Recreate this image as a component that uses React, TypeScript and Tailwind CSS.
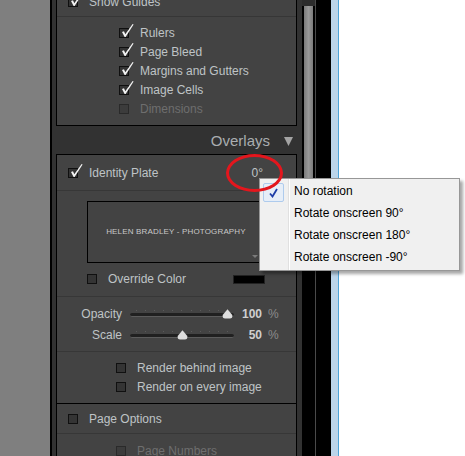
import type { ReactNode } from "react";

function Box({ checked = false, dim = false }: { checked?: boolean; dim?: boolean }) {
  return (
    <span
      className={`relative block h-[10px] w-[10px] shrink-0 border ${
        dim ? "border-[#2a2a2a] bg-[#3c3c3c]" : "border-[#101010] bg-[#343434]"
      }`}
    >
      {checked && (
        <svg
          className="absolute top-[-6px] left-[-1px] h-[16px] w-[16px] overflow-visible"
          viewBox="0 0 16 16"
        >
          <path d="M3 9 L5 8.2 L6.3 11.2 L13.6 1 L14.6 1.6 L6.6 14 L5.6 14 Z" fill="#f2f2f2" />
        </svg>
      )}
    </span>
  );
}

function Row({
  h,
  pl,
  checked,
  dim,
  children,
}: {
  h: string;
  pl: string;
  checked?: boolean;
  dim?: boolean;
  children: ReactNode;
}) {
  return (
    <div className={`flex shrink-0 items-center ${h} ${pl}`}>
      <Box checked={checked} dim={dim} />
      <span className={`ml-[11px] text-[12px] ${dim ? "text-[#6e6e6e]" : "text-[#bfc3c6]"}`}>
        {children}
      </span>
    </div>
  );
}

function Slider({ label, value, pos }: { label: string; value: string; pos: string }) {
  return (
    <div className="flex h-[20px] items-center">
      <span className="w-[65px] text-right text-[12px] text-[#bfc3c6]">{label}</span>
      <div className="relative ml-[8px] h-[20px] w-[104px]">
        <div className="absolute top-[6px] right-[6px] left-[6px] flex justify-between">
          {Array.from({ length: 11 }).map((_, i) => (
            <span key={i} className="h-[1px] w-[1px] bg-[#5a5a5a]" />
          ))}
        </div>
        <div className="absolute top-[9px] right-0 left-0 h-[4px] rounded-full border-b border-[#5c5c5c] bg-[#202020]" />
        <svg className={`absolute top-[5px] h-[10px] w-[11px] ${pos}`} viewBox="0 0 11 10">
          <path d="M5.5 0.3 L10.3 6 Q10.8 9.5 7.8 9.6 L3.2 9.6 Q0.2 9.5 0.7 6 Z" fill="#dedede" />
        </svg>
      </div>
      <span className="w-[28px] text-right text-[12px] font-bold text-[#cfcfcf]">{value}</span>
      <span className="ml-[6px] text-[12px] text-[#8c8c8c]">%</span>
    </div>
  );
}

export default function App() {
  return (
    <div className="relative flex h-[456px] w-[465px] overflow-hidden bg-white font-['Liberation_Sans',Arial,sans-serif]">
      <div className="w-[50px] shrink-0 bg-[#7f7f7f]" />
      <div className="w-[2px] shrink-0 bg-black" />

      {/* panel */}
      <div className="flex w-[250px] shrink-0 flex-col bg-[#323232] pr-[5px] pl-[4px]">
        {/* guides card */}
        <div className="-mt-[12px] w-[241px] shrink-0 border-x border-b border-black bg-[#434343]">
          <div className="border-b border-[#363636]">
            <Row h="h-[28px]" pl="pl-[11px]" checked>
              Show Guides
            </Row>
          </div>
          <div className="pt-[6px] pb-[7px]">
            <Row h="h-[19px]" pl="pl-[62px]" checked>Rulers</Row>
            <Row h="h-[19px]" pl="pl-[62px]" checked>Page Bleed</Row>
            <Row h="h-[19px]" pl="pl-[62px]" checked>Margins and Gutters</Row>
            <Row h="h-[19px]" pl="pl-[62px]" checked>Image Cells</Row>
            <Row h="h-[19px]" pl="pl-[62px]" dim>Dimensions</Row>
          </div>
        </div>

        {/* header */}
        <div className="flex h-[28px] shrink-0 items-center justify-end pt-[3px] pr-[4px]">
          <span className="text-[15px] text-[#a9adb0]">Overlays</span>
          <svg className="ml-[14px] h-[9px] w-[9px]" viewBox="0 0 9 9">
            <path d="M0 0 L9 0 L4.5 9 Z" fill="#a3a3a3" />
          </svg>
        </div>

        {/* overlays card */}
        <div className="w-[241px] shrink-0 grow border-x border-t border-black bg-[#434343]">
          <div className="border-b border-[#373737]">
            <div className="flex h-[35px] items-center pr-[33px] pl-[11px]">
              <Box checked />
              <span className="ml-[11px] text-[12px] text-[#bfc3c6]">Identity Plate</span>
              <span className="ml-auto text-[12px] text-[#bfc3c6]">0°</span>
            </div>
          </div>

          <div className="border-b border-[#373737] pt-[10px] pb-[8px] pl-[30px]">
            <div className="relative flex h-[62px] w-[178px] items-center justify-center border border-black">
              <span className="text-[8px] tracking-[0.02em] text-[#c9c9c9]">
                HELEN BRADLEY - PHOTOGRAPHY
              </span>
              <svg className="absolute right-[6px] bottom-[4px] h-[3px] w-[6px]" viewBox="0 0 6 3">
                <path d="M0 0 L6 0 L3 3 Z" fill="#7a7a7a" />
              </svg>
            </div>
            <div className="mt-[7px] flex h-[18px] w-[178px] items-center">
              <Box />
              <span className="ml-[11px] text-[12px] text-[#bfc3c6]">Override Color</span>
              <span className="ml-auto h-[9px] w-[32px] border border-[#222] bg-black" />
            </div>
          </div>

          <div className="border-b border-[#373737] pt-[7px] pb-[6px]">
            <Slider label="Opacity" value="100" pos="left-[92px]" />
            <div className="h-[1px]" />
            <Slider label="Scale" value="50" pos="left-[47px]" />
          </div>

          <div className="border-b border-black pt-[6px] pb-[7px]">
            <Row h="h-[19px]" pl="pl-[59px]">Render behind image</Row>
            <Row h="h-[19px]" pl="pl-[59px]">Render on every image</Row>
          </div>

          <div className="border-b border-[#373737]">
            <Row h="h-[29px]" pl="pl-[11px]">Page Options</Row>
          </div>
          <div className="pt-[7px]">
            <Row h="h-[19px]" pl="pl-[59px]" dim>Page Numbers</Row>
          </div>
        </div>
      </div>

      {/* scrollbar */}
      <div className="relative w-[14px] shrink-0 border-r border-[#4a4a4a] bg-black">
        <div className="absolute top-0 left-0 h-[6px] w-[13px] bg-[#2c2c2c]" />
        <div className="absolute top-[6px] left-[2px] h-[244px] w-[9px] bg-gradient-to-r from-[#7a7a7a] via-[#989898] to-[#7c7c7c]" />
      </div>
      <div className="w-[15px] shrink-0 bg-black" />
      <div className="w-[7px] shrink-0 bg-[#bcd5ea]" />
      <div className="w-[1px] shrink-0 bg-[#4fa4d8]" />
      <div className="grow bg-white" />

      {/* context menu */}
      <div className="absolute top-[178px] left-[259px] flex h-[93px] w-[201px] border border-[#979797] bg-[#f0f0f0] shadow-[3px_3px_3px_rgba(0,0,0,0.35)]">
        <div className="w-[29px] shrink-0 border-r border-[#e0e0e0] pt-[4px] pl-[3px]">
          <div className="flex h-[19px] w-[21px] items-center justify-center rounded-[2px] border border-[#aecbed] bg-[#e6eef8]">
            <svg className="h-[10px] w-[9px]" viewBox="0 0 9 10">
              <path d="M1 5.5 L3.5 8.5 L8 1" fill="none" stroke="#1e3ea8" strokeWidth="1.8" />
            </svg>
          </div>
        </div>
        <div className="flex flex-col border-l border-white pt-[1px] pl-[4px] text-[12px] text-black">
          <span className="flex h-[22px] items-center">No rotation</span>
          <span className="flex h-[22px] items-center">Rotate onscreen 90°</span>
          <span className="flex h-[22px] items-center">Rotate onscreen 180°</span>
          <span className="flex h-[22px] items-center">Rotate onscreen -90°</span>
        </div>
      </div>

      {/* red annotation */}
      <div className="pointer-events-none absolute top-[154px] left-[226px] h-[38px] w-[57px] rounded-[50%] border-[3px] border-[#e3161d]" />
    </div>
  );
}
